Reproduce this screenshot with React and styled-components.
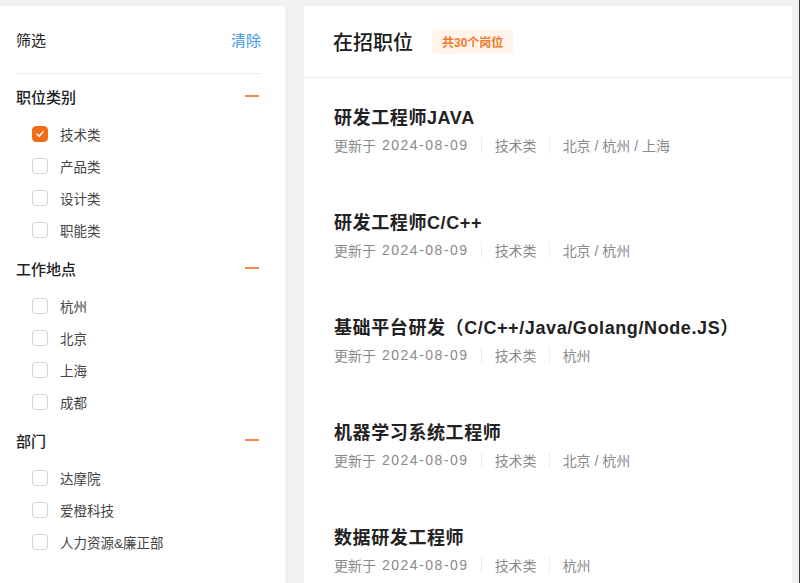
import React from "react";
import styled, { createGlobalStyle } from "styled-components";

const Global = createGlobalStyle`
  html, body { margin: 0; padding: 0; background: #f1f1f1; }
  body { font-family: "Liberation Sans", "Noto Sans CJK SC", sans-serif; }
  * { box-sizing: border-box; }
`;

const Page = styled.div`
  display: flex;
  gap: 19px;
  padding: 6px 7px 0 0;
  height: 583px;
  overflow: hidden;
  border-right: 1px solid #3a3a3a;
`;

const Sidebar = styled.aside`
  width: 285px;
  flex: none;
  background: #fff;
  padding: 0 24px 0 16px;
`;

const SideHeader = styled.div`
  height: 68px;
  display: flex;
  align-items: center;
  justify-content: space-between;
  border-bottom: 1px solid #ebebeb;
`;

const SideTitle = styled.span`
  font-size: 15px;
  color: #222;
`;

const Clear = styled.span`
  font-size: 15px;
  color: #3b95f0;
`;

const SectionHead = styled.div`
  height: 44px;
  display: flex;
  align-items: center;
  justify-content: space-between;
  font-size: 15px;
  font-weight: 500;
  color: #222;
`;

const Minus = styled.span`
  width: 14px;
  height: 1.5px;
  background: #f58a4f;
  margin-right: 2px;
`;

const Option = styled.label`
  height: 32px;
  display: flex;
  align-items: center;
  gap: 12px;
  padding-left: 16px;
  font-size: 13.5px;
  color: #444;
`;

const Box = styled.span`
  width: 16px;
  height: 16px;
  border-radius: 4px;
  border: 1px solid ${(p) => (p.$on ? "#f26c1a" : "#cfd5de")};
  background: ${(p) => (p.$on ? "#f26c1a" : "#fff")};
  display: flex;
  align-items: center;
  justify-content: center;
`;

const Main = styled.main`
  flex: 1;
  background: #fff;
`;

const MainHeader = styled.div`
  height: 72px;
  display: flex;
  align-items: center;
  padding-left: 29px;
  border-bottom: 1px solid #ebebeb;
`;

const MainTitle = styled.h1`
  margin: 0;
  font-size: 20px;
  font-weight: 500;
  color: #1a1a1a;
`;

const Badge = styled.span`
  margin-left: 19px;
  height: 24px;
  padding: 0 10px;
  display: flex;
  align-items: center;
  background: #fff4eb;
  color: #f5782a;
  font-size: 12px;
  font-weight: 600;
  border-radius: 2px;
`;

const Job = styled.div`
  padding: 28px 20px 28px 30px;
`;

const JobTitle = styled.div`
  height: 24px;
  line-height: 24px;
  font-size: 18px;
  font-weight: 600;
  letter-spacing: 0.6px;
  color: #222;
  margin-bottom: 5px;
  white-space: nowrap;
`;

const Meta = styled.div`
  display: flex;
  align-items: center;
  height: 20px;
  margin-top: 1px;
  font-size: 14px;
  color: #8a8a8a;
`;

const DateText = styled.span`
  margin-left: 6px;
  letter-spacing: 1.5px;
`;

const Sep = styled.span`
  width: 1px;
  height: 16px;
  background: #ececec;
  margin: 0 13px 0 12px;
`;

const Check = () => (
  <svg width="10" height="10" viewBox="0 0 10 10">
    <path d="M2 5.2 L4.2 7.3 L8 2.8" fill="none" stroke="#fff" strokeWidth="1.4" strokeLinecap="round" strokeLinejoin="round" />
  </svg>
);

const sections = [
  { title: "职位类别", items: ["技术类", "产品类", "设计类", "职能类"], checked: 0 },
  { title: "工作地点", items: ["杭州", "北京", "上海", "成都"] },
  { title: "部门", items: ["达摩院", "爱橙科技", "人力资源&廉正部"] },
];

const jobs = [
  { title: "研发工程师JAVA", place: "北京 / 杭州 / 上海" },
  { title: "研发工程师C/C++", place: "北京 / 杭州" },
  { title: "基础平台研发（C/C++/Java/Golang/Node.JS）", place: "杭州" },
  { title: "机器学习系统工程师", place: "北京 / 杭州" },
  { title: "数据研发工程师", place: "杭州" },
];

export default function App() {
  return (
    <>
      <Global />
      <Page>
        <Sidebar>
          <SideHeader>
            <SideTitle>筛选</SideTitle>
            <Clear>清除</Clear>
          </SideHeader>
          {sections.map((s) => (
            <div key={s.title}>
              <SectionHead>
                {s.title}
                <Minus />
              </SectionHead>
              {s.items.map((it, i) => (
                <Option key={it}>
                  <Box $on={s.checked === i}>{s.checked === i && <Check />}</Box>
                  {it}
                </Option>
              ))}
            </div>
          ))}
        </Sidebar>
        <Main>
          <MainHeader>
            <MainTitle>在招职位</MainTitle>
            <Badge>共30个岗位</Badge>
          </MainHeader>
          {jobs.map((j) => (
            <Job key={j.title}>
              <JobTitle>{j.title}</JobTitle>
              <Meta>
                更新于
                <DateText>2024-08-09</DateText>
                <Sep />
                技术类
                <Sep />
                {j.place}
              </Meta>
            </Job>
          ))}
        </Main>
      </Page>
    </>
  );
}
